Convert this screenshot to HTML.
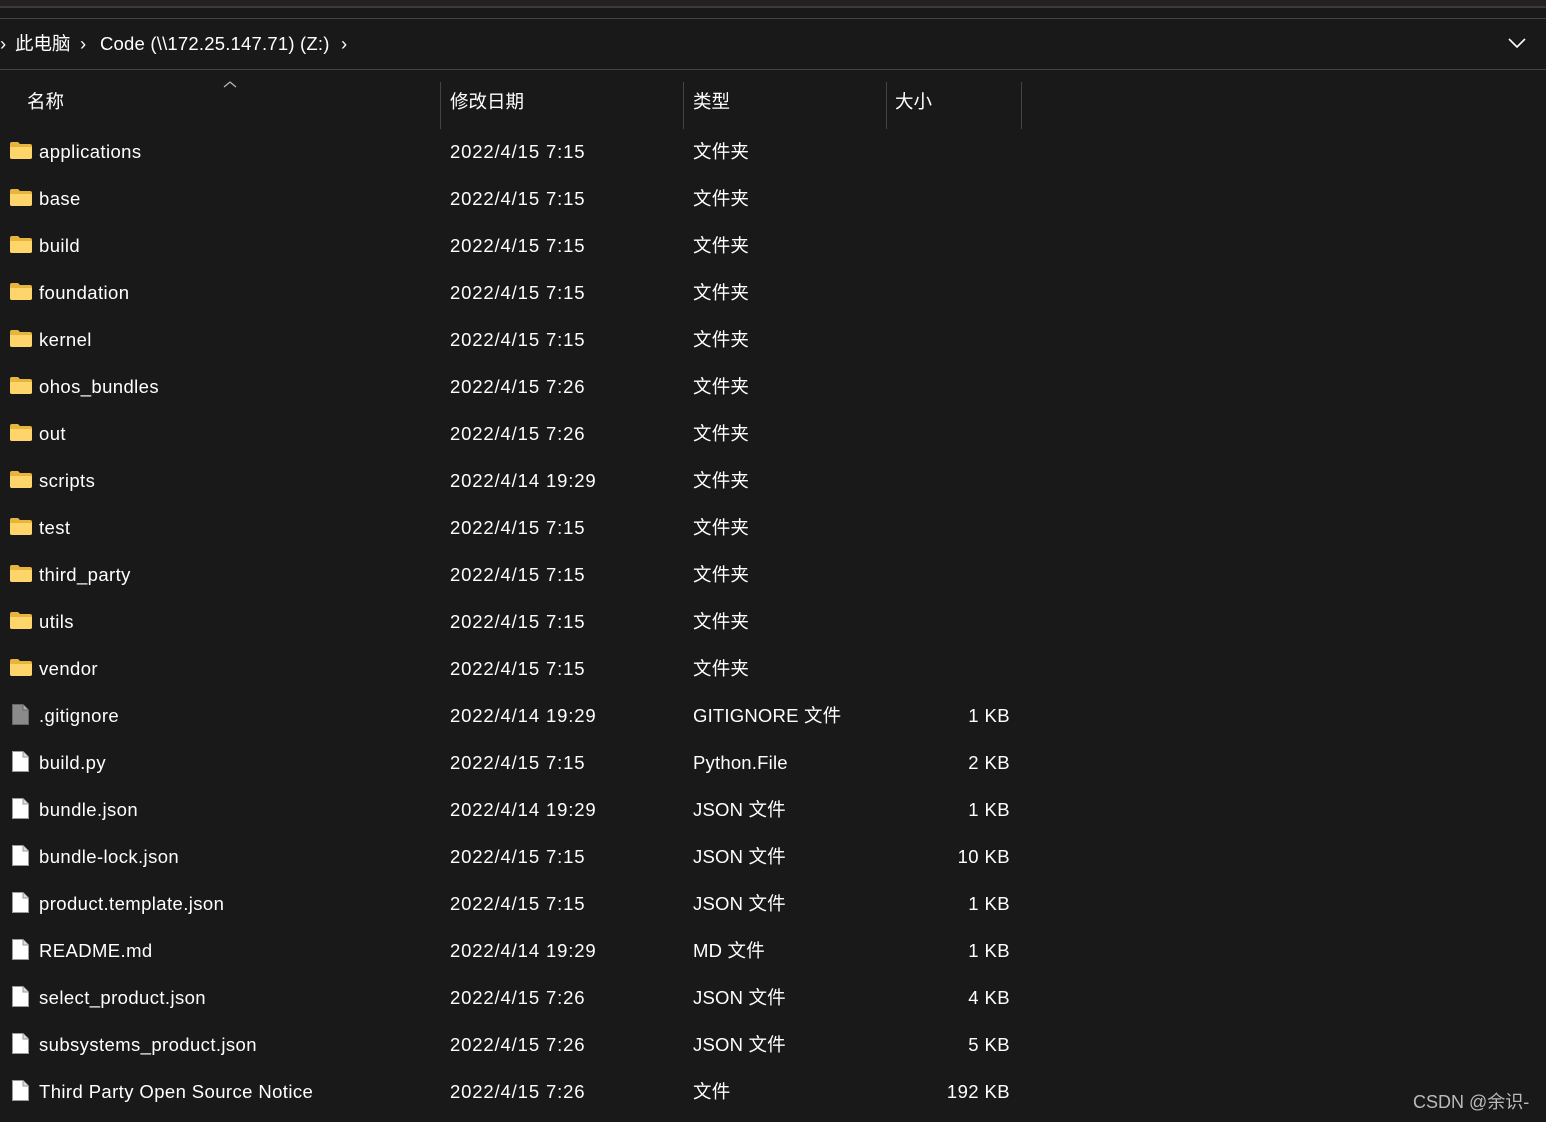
<!DOCTYPE html>
<html><head><meta charset="utf-8"><style>
*{margin:0;padding:0;box-sizing:border-box}
body{width:1546px;height:1122px;background:#191919;color:#fff;font-family:"Liberation Sans","Noto Sans CJK SC",sans-serif;font-size:18.5px;position:relative;overflow:hidden}
.a{position:absolute;white-space:nowrap;line-height:22px}
.r{position:absolute;left:0;width:1100px;height:22px}
.r span{position:absolute;top:1px;line-height:22px;white-space:nowrap;letter-spacing:0.4px}
.n{left:39px}.d{left:450px;letter-spacing:0.85px!important}.t{left:693px;letter-spacing:0.2px!important}.s{right:90px;text-align:right}
.fd{position:absolute;left:10px;top:2px;width:22px;height:17px}
.fl{position:absolute;left:12px;top:0px;width:17px;height:21px}
.sep{position:absolute;top:82px;height:47px;width:1px;background:#444}
</style></head><body>
<div style="position:absolute;left:0;top:0;width:1546px;height:6px;background:#251f1f"></div>
<div style="position:absolute;left:0;top:6px;width:1546px;height:2px;background:#3a3a3a"></div>
<div style="position:absolute;left:0;top:18px;width:1546px;height:1px;background:#444"></div>
<div style="position:absolute;left:0;top:69px;width:1546px;height:1px;background:#444"></div>
<div class="a" style="left:0;top:33px">›</div>
<div class="a" style="left:15px;top:33px">此电脑</div>
<div class="a" style="left:80px;top:33px">›</div>
<div class="a" style="left:100px;top:33px;letter-spacing:0.2px">Code (\\172.25.147.71) (Z:)</div>
<div class="a" style="left:341px;top:33px">›</div>
<svg style="position:absolute;left:1508px;top:37px" width="18" height="12"><path d="M1 2 L9 10 L17 2" stroke="#fff" stroke-width="1.6" fill="none"/></svg>
<svg style="position:absolute;left:223px;top:80px" width="14" height="9"><path d="M1 7 L7 2 L13 7" stroke="#bbb" stroke-width="1.2" fill="none"/></svg>
<div class="a" style="left:27px;top:91px">名称</div>
<div class="a" style="left:450px;top:91px">修改日期</div>
<div class="a" style="left:693px;top:91px">类型</div>
<div class="a" style="left:895px;top:91px">大小</div>
<div class="sep" style="left:440px"></div><div class="sep" style="left:683px"></div><div class="sep" style="left:886px"></div><div class="sep" style="left:1021px"></div>

<svg width="0" height="0" style="position:absolute"><defs>
<symbol id="fo" viewBox="0 0 22 17"><path d="M0 2 Q0 0 2 0 L8 0 L10 2 L20 2 Q22 2 22 4 L22 15 Q22 17 20 17 L2 17 Q0 17 0 15Z" fill="#e8b53c"/><path d="M0 5 L22 5 L22 15 Q22 17 20 17 L2 17 Q0 17 0 15Z" fill="#fdd56b"/></symbol>
<symbol id="fw" viewBox="0 0 17 21"><path d="M0.5 0.5 L11 0.5 L16.5 6 L16.5 20.5 L0.5 20.5Z" fill="#fff" stroke="#999"/><path d="M11 0.5 L11 6 L16.5 6" fill="#ddd" stroke="#999"/></symbol>
<symbol id="fg" viewBox="0 0 17 21"><path d="M0.5 0.5 L11 0.5 L16.5 6 L16.5 20.5 L0.5 20.5Z" fill="#8a8a8a" stroke="#666"/><path d="M11 0.5 L11 6 L16.5 6" fill="#aaa" stroke="#666"/></symbol>
</defs></svg>

<div class="r" style="top:140px"><svg class="fd"><use href="#fo"/></svg><span class="n">applications</span><span class="d">2022/4/15 7:15</span><span class="t">文件夹</span></div>
<div class="r" style="top:187px"><svg class="fd"><use href="#fo"/></svg><span class="n">base</span><span class="d">2022/4/15 7:15</span><span class="t">文件夹</span></div>
<div class="r" style="top:234px"><svg class="fd"><use href="#fo"/></svg><span class="n">build</span><span class="d">2022/4/15 7:15</span><span class="t">文件夹</span></div>
<div class="r" style="top:281px"><svg class="fd"><use href="#fo"/></svg><span class="n">foundation</span><span class="d">2022/4/15 7:15</span><span class="t">文件夹</span></div>
<div class="r" style="top:328px"><svg class="fd"><use href="#fo"/></svg><span class="n">kernel</span><span class="d">2022/4/15 7:15</span><span class="t">文件夹</span></div>
<div class="r" style="top:375px"><svg class="fd"><use href="#fo"/></svg><span class="n">ohos_bundles</span><span class="d">2022/4/15 7:26</span><span class="t">文件夹</span></div>
<div class="r" style="top:422px"><svg class="fd"><use href="#fo"/></svg><span class="n">out</span><span class="d">2022/4/15 7:26</span><span class="t">文件夹</span></div>
<div class="r" style="top:469px"><svg class="fd"><use href="#fo"/></svg><span class="n">scripts</span><span class="d">2022/4/14 19:29</span><span class="t">文件夹</span></div>
<div class="r" style="top:516px"><svg class="fd"><use href="#fo"/></svg><span class="n">test</span><span class="d">2022/4/15 7:15</span><span class="t">文件夹</span></div>
<div class="r" style="top:563px"><svg class="fd"><use href="#fo"/></svg><span class="n">third_party</span><span class="d">2022/4/15 7:15</span><span class="t">文件夹</span></div>
<div class="r" style="top:610px"><svg class="fd"><use href="#fo"/></svg><span class="n">utils</span><span class="d">2022/4/15 7:15</span><span class="t">文件夹</span></div>
<div class="r" style="top:657px"><svg class="fd"><use href="#fo"/></svg><span class="n">vendor</span><span class="d">2022/4/15 7:15</span><span class="t">文件夹</span></div>
<div class="r" style="top:704px"><svg class="fl"><use href="#fg"/></svg><span class="n">.gitignore</span><span class="d">2022/4/14 19:29</span><span class="t">GITIGNORE 文件</span><span class="s">1 KB</span></div>
<div class="r" style="top:751px"><svg class="fl"><use href="#fw"/></svg><span class="n">build.py</span><span class="d">2022/4/15 7:15</span><span class="t">Python.File</span><span class="s">2 KB</span></div>
<div class="r" style="top:798px"><svg class="fl"><use href="#fw"/></svg><span class="n">bundle.json</span><span class="d">2022/4/14 19:29</span><span class="t">JSON 文件</span><span class="s">1 KB</span></div>
<div class="r" style="top:845px"><svg class="fl"><use href="#fw"/></svg><span class="n">bundle-lock.json</span><span class="d">2022/4/15 7:15</span><span class="t">JSON 文件</span><span class="s">10 KB</span></div>
<div class="r" style="top:892px"><svg class="fl"><use href="#fw"/></svg><span class="n">product.template.json</span><span class="d">2022/4/15 7:15</span><span class="t">JSON 文件</span><span class="s">1 KB</span></div>
<div class="r" style="top:939px"><svg class="fl"><use href="#fw"/></svg><span class="n">README.md</span><span class="d">2022/4/14 19:29</span><span class="t">MD 文件</span><span class="s">1 KB</span></div>
<div class="r" style="top:986px"><svg class="fl"><use href="#fw"/></svg><span class="n">select_product.json</span><span class="d">2022/4/15 7:26</span><span class="t">JSON 文件</span><span class="s">4 KB</span></div>
<div class="r" style="top:1033px"><svg class="fl"><use href="#fw"/></svg><span class="n">subsystems_product.json</span><span class="d">2022/4/15 7:26</span><span class="t">JSON 文件</span><span class="s">5 KB</span></div>
<div class="r" style="top:1080px"><svg class="fl"><use href="#fw"/></svg><span class="n">Third Party Open Source Notice</span><span class="d">2022/4/15 7:26</span><span class="t">文件</span><span class="s">192 KB</span></div>
<div class="a" style="left:1413px;top:1091px;color:#bbb;font-size:18px">CSDN @余识-</div>
</body></html>
